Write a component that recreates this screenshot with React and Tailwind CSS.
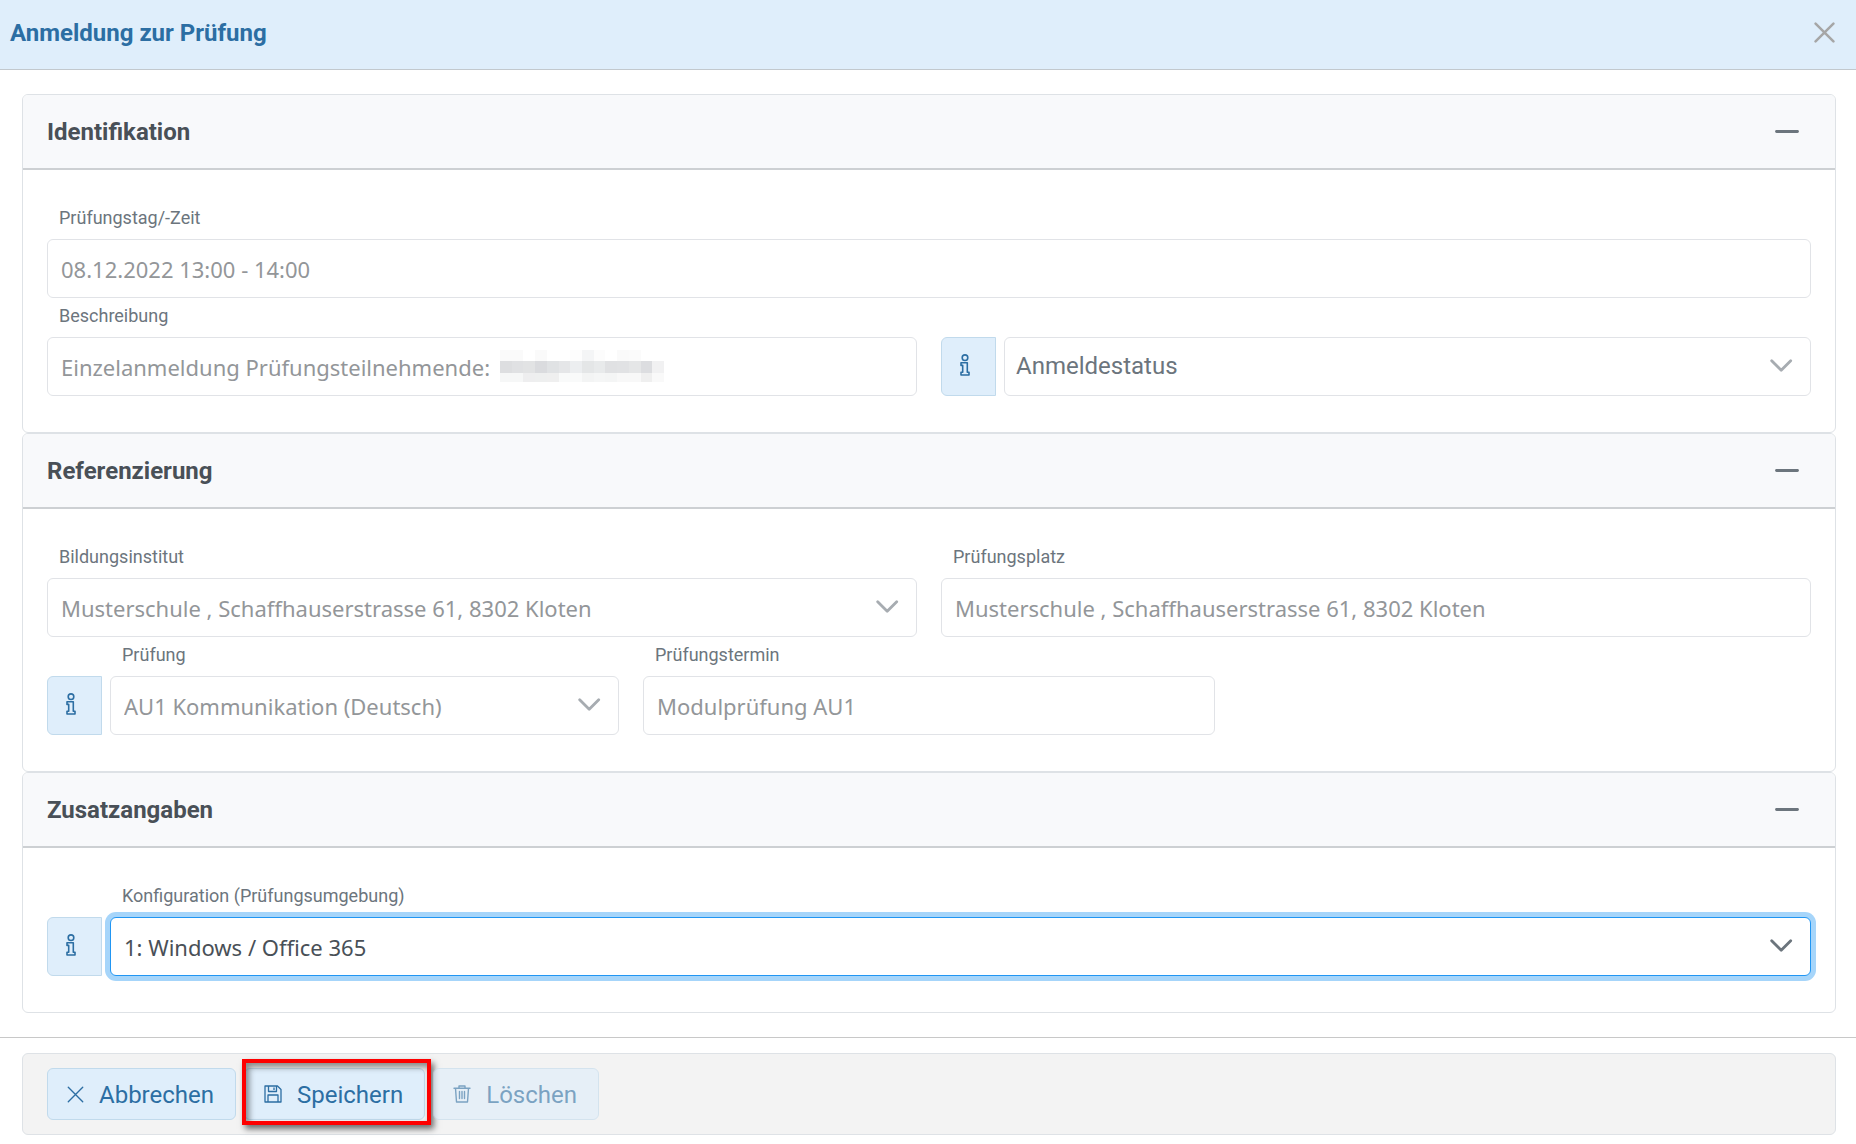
import { useState } from 'react';

const inputClass =
  'h-[59px] w-full min-w-0 rounded-md border border-[#e1e3e7] bg-white pl-[13px] font-["Noto_Sans",sans-serif] text-[22px] text-[#939699]';

function IconSave() {
  return (
    <svg width="18" height="18" viewBox="0 0 18 18" fill="none" stroke="currentColor" strokeWidth="1.3" strokeLinejoin="round">
      <path d="M1 1h12.5L17 4.5V17H1z" />
      <path d="M4.5 1v5.5h8V1M10 2.5V5M4 17v-7h10v7" />
    </svg>
  );
}

function IconTrash() {
  return (
    <svg width="18" height="18" viewBox="0 0 18 18" fill="none" stroke="currentColor" strokeWidth="1.4" strokeLinecap="round" strokeLinejoin="round">
      <path d="M1 3.2h16M2.5 3.2 3.5 17h11l1-13.8M6 3.2V1h6v2.2M6.5 6.5v7M9 6.5v7M11.5 6.5v7" />
    </svg>
  );
}

function IconTimes({ size, strokeWidth }) {
  return (
    <svg width={size} height={size} viewBox="0 0 20 20" fill="none" stroke="currentColor" strokeWidth={strokeWidth} strokeLinecap="round">
      <path d="m1.5 1.5 17 17M18.5 1.5l-17 17" />
    </svg>
  );
}

function InfoButton() {
  return (
    <button
      type="button"
      aria-label="Info"
      className="flex h-[59px] w-[55px] shrink-0 items-center justify-center rounded-l-md border border-[#c1daec] bg-[#dfeefb] pr-[7px] pb-[3px] text-[#2c6ea3]"
    >
      <svg width="10" height="22" viewBox="0 0 10 22" fill="none" stroke="currentColor" strokeWidth="1.6" strokeLinejoin="round">
        <circle cx="5" cy="3.7" r="2.8" />
        <path d="M1 8.7h6.3v9.6H9V21H1v-2.7h1.7v-6.9H1z" />
      </svg>
    </button>
  );
}

function Select({ id, value, disabled, focused, placeholder }) {
  return (
    <div className="relative min-w-0 flex-1">
      <select
        id={id}
        disabled={disabled}
        aria-label={placeholder}
        className={`h-[59px] w-full appearance-none rounded-md border bg-white opacity-100 ${
          placeholder
            ? 'border-[#e1e3e7] pb-[2px] pl-[11px] font-[Roboto,sans-serif] text-2xl text-[#6c757d]'
            : 'pt-[2px] pl-[13px] font-["Noto_Sans",sans-serif] text-[22px]'
        } ${focused ? 'border-[#2196f3] text-[#495057] ring-5 ring-[#a6d5fa]' : ''} ${
          disabled ? 'border-[#e1e3e7] text-[#939699]' : ''
        }`}
      >
        <option>{value}</option>
      </select>
      <svg
        className={`pointer-events-none absolute top-[22px] right-[18px] ${focused ? 'text-[#6c757d]' : 'text-[#a7acb1]'}`}
        width="23"
        height="13"
        viewBox="0 0 23 13"
        fill="none"
        stroke="currentColor"
        strokeWidth="2.8"
        strokeLinecap="round"
        strokeLinejoin="round"
      >
        <path d="m1.7 1.7 9.5 9.5 9.5-9.5" />
      </svg>
    </div>
  );
}

function Field({ id, label, info, children }) {
  return (
    <div className="flex min-w-0 flex-col">
      <label htmlFor={id} className={`flex h-[39px] items-center pb-[3px] text-lg text-[#6c757d] ${info ? 'pl-[75px]' : 'pl-3'}`}>
        {label}
      </label>
      <div className="flex gap-2">
        {info && <InfoButton />}
        {children}
      </div>
    </div>
  );
}

function Panel({ title, children }) {
  const [open, setOpen] = useState(true);
  return (
    <section className="overflow-hidden rounded-md border border-[#dee2e6] bg-white">
      <div className="flex h-[75px] items-center justify-between border-b-2 border-[#cdd0d3] bg-[#f8f9fb] pr-9 pl-6">
        <h2 className="text-2xl font-bold text-[#495057]">{title}</h2>
        <button type="button" aria-label={title} onClick={() => setOpen(!open)} className="flex h-[33px] items-center text-[#6c757d]">
          <svg width="24" height="3" viewBox="0 0 24 3" fill="none" stroke="currentColor" strokeWidth="2.8" strokeLinecap="round">
            <path d={open ? 'M1.5 1.5h21' : 'M1.5 1.5h21M12 0v3'} />
          </svg>
        </button>
      </div>
      {open && <div className="px-6 pt-[30px] pb-9">{children}</div>}
    </section>
  );
}

const buttonClass =
  'flex h-[52px] items-center gap-[15px] rounded-md border border-[#c1daec] bg-[#dfeefb] pr-[21px] pl-[19px] text-2xl text-[#2c6ea3]';

export default function App() {
  return (
    <div className="min-h-screen bg-white font-[Roboto,sans-serif]">
      <header className="flex h-[70px] items-center justify-between border-b border-[#c2c8cd] bg-[#dfeefb] pr-[21px] pb-1 pl-[10px]">
        <h1 className="text-2xl font-bold text-[#2c6ea3]">Anmeldung zur Prüfung</h1>
        <button type="button" aria-label="Schliessen" className="text-[#a6a6a6]">
          <IconTimes size={21} strokeWidth={2.4} />
        </button>
      </header>

      <main className="px-[22px] pt-6 pr-5 pb-6">
        <Panel title="Identifikation">
          <Field id="zeit" label="Prüfungstag/-Zeit">
            <input id="zeit" disabled defaultValue="08.12.2022 13:00 - 14:00" className={inputClass} />
          </Field>
          <div className="grid grid-cols-2 items-end gap-6">
            <Field id="beschreibung" label="Beschreibung">
              <div className="relative w-full">
                <input id="beschreibung" disabled defaultValue="Einzelanmeldung Prüfungsteilnehmende:" className={inputClass} />
                <Redacted />
              </div>
            </Field>
            <div className="flex gap-2">
              <InfoButton />
              <Select id="status" value="Anmeldestatus" placeholder="Anmeldestatus" />
            </div>
          </div>
        </Panel>

        <Panel title="Referenzierung">
          <div className="grid grid-cols-2 gap-x-6">
            <Field id="institut" label="Bildungsinstitut">
              <Select id="institut" disabled value="Musterschule , Schaffhauserstrasse 61, 8302 Kloten" />
            </Field>
            <Field id="platz" label="Prüfungsplatz">
              <input id="platz" disabled defaultValue="Musterschule , Schaffhauserstrasse 61, 8302 Kloten" className={inputClass} />
            </Field>
          </div>
          <div className="grid grid-cols-3 gap-x-6">
            <Field id="pruefung" label="Prüfung" info>
              <Select id="pruefung" disabled value="AU1 Kommunikation (Deutsch)" />
            </Field>
            <Field id="termin" label="Prüfungstermin">
              <input id="termin" disabled defaultValue="Modulprüfung AU1" className={inputClass} />
            </Field>
          </div>
        </Panel>

        <Panel title="Zusatzangaben">
          <Field id="konfiguration" label="Konfiguration (Prüfungsumgebung)" info>
            <Select id="konfiguration" focused value="1: Windows / Office 365" />
          </Field>
        </Panel>
      </main>

      <footer className="border-t border-[#c8c8c8] pt-[15px] pr-5 pb-[9px] pl-[22px]">
        <div className="flex gap-2 rounded-md border border-[#dee2e6] bg-[#f3f3f3] px-6 py-[14px]">
          <button type="button" className={buttonClass}>
            <IconTimes size={17} strokeWidth={1.6} />
            <span className="pt-[2px]">Abbrechen</span>
          </button>
          <div className="relative">
            <button type="button" className={buttonClass}>
              <IconSave />
              <span className="pt-[2px]">Speichern</span>
            </button>
            <span className="pointer-events-none absolute -top-[9px] -right-[6px] -bottom-[5px] -left-[2px] border-4 border-[#fe0000] shadow-[3px_4px_6px_rgba(0,0,0,0.55),inset_3px_4px_6px_rgba(0,0,0,0.45)]" />
          </div>
          <button type="button" disabled className={`${buttonClass} opacity-60`}>
            <IconTrash />
            <span className="pt-[2px]">Löschen</span>
          </button>
        </div>
      </footer>
    </div>
  );
}

// pixelated name behind the description
const redactedRows = [
  { height: 'h-[11px]', cells: ['#fafafa', '#fafafa', '#ffffff', '#fafafa', '#ffffff', '#ffffff', '#fdfdfd', '#f4f5f6', '#fcfcfc', '#ffffff', '#fafafa', '#fbfbfb', '#ffffff', '#ffffff'] },
  { height: 'h-[12px]', cells: ['#dddee0', '#e0e1e3', '#e2e3e4', '#dadbde', '#e0e2e4', '#e5e6e8', '#eceef0', '#e4e6e7', '#e8eaeb', '#e0e1e3', '#e1e2e4', '#e5e6e7', '#dcdde0', '#f1f1f2'] },
  { height: 'h-[9px]', cells: ['#f6f7f7', '#f6f7f7', '#eeeeef', '#eeefef', '#efefef', '#f9fafa', '#f9fafa', '#f3f4f4', '#f5f6f6', '#f4f5f5', '#f8f8f8', '#f8f8f8', '#efefef', '#f9f9f9'] },
];

function Redacted() {
  return (
    <div className="pointer-events-none absolute top-[13px] left-[453px] w-[164px]">
      {redactedRows.map((row) => (
        <div key={row.height} className={`flex ${row.height}`}>
          {row.cells.map((color, i) => (
            <span key={i} className="flex-1" style={{ backgroundColor: color }} />
          ))}
        </div>
      ))}
    </div>
  );
}
